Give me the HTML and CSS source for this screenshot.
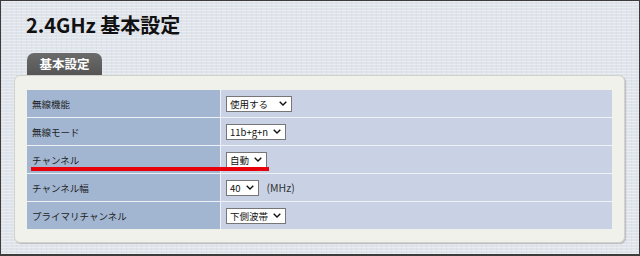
FILE: index.html
```html
<!DOCTYPE html>
<html lang="ja">
<head>
<meta charset="utf-8">
<title>2.4GHz 基本設定</title>
<link rel="stylesheet" href="styles.css">
</head>
<body>
<div class="frame">
  <h1 class="title">2.4GHz 基本設定</h1>
  <div class="section">
    <div class="tab">基本設定</div>
    <div class="panel">
      <div class="table">
        <div class="label">無線機能</div>
        <div class="value"><div class="select select-wide"><span>使用する</span><svg class="chev" viewBox="0 0 8 5"><path d="M0.7 0.7 L4 4 L7.3 0.7"/></svg></div></div>
        <div class="label">無線モード</div>
        <div class="value"><div class="select"><span>11b+g+n</span><svg class="chev" viewBox="0 0 8 5"><path d="M0.7 0.7 L4 4 L7.3 0.7"/></svg></div></div>
        <div class="label">チャンネル</div>
        <div class="value"><div class="select"><span>自動</span><svg class="chev" viewBox="0 0 8 5"><path d="M0.7 0.7 L4 4 L7.3 0.7"/></svg></div></div>
        <div class="label">チャンネル幅</div>
        <div class="value"><div class="select"><span>40</span><svg class="chev" viewBox="0 0 8 5"><path d="M0.7 0.7 L4 4 L7.3 0.7"/></svg></div><span class="unit">(MHz)</span></div>
        <div class="label">プライマリチャンネル</div>
        <div class="value"><div class="select"><span>下側波帯</span><svg class="chev" viewBox="0 0 8 5"><path d="M0.7 0.7 L4 4 L7.3 0.7"/></svg></div></div>
      </div>
    </div>
  </div>
  <div class="highlight"></div>
</div>
</body>
</html>
```

FILE: styles.css
```css
html, body {
  margin: 0;
  padding: 0;
}
body {
  font-family: "Noto Sans CJK JP", "Noto Sans", sans-serif;
  color: #1c1c1c;
}
.frame {
  position: relative;
  width: 640px;
  height: 256px;
  box-sizing: border-box;
  border: 1px solid #3c3c3c;
  border-bottom-width: 2px;
  background-color: #dfe3ea;
  background-image:
    repeating-linear-gradient(180deg, rgba(255,255,255,0.35) 0 1px, rgba(0,0,0,0) 1px 3px),
    repeating-linear-gradient(90deg, rgba(140,150,170,0.07) 0 1px, rgba(0,0,0,0) 1px 5px);
  overflow: hidden;
}
.title {
  margin: 12px 0 0 25px;
  font-size: 20px;
  line-height: 24px;
  font-weight: 700;
  color: #111;
}
.section {
  margin: 16px 0 0 13px;
}
.tab {
  margin-left: 13px;
  width: 75px;
  height: 22px;
  box-sizing: border-box;
  border-radius: 7px 7px 0 0;
  background: linear-gradient(#6b6b6b, #555555);
  color: #fff;
  font-size: 12.5px;
  font-weight: 700;
  line-height: 22px;
  text-align: center;
}
.panel {
  width: 611px;
  height: 168px;
  box-sizing: border-box;
  padding: 14px 12px 13px 12px;
  background: #f1f1eb;
  border: 1px solid #d2d2cc;
  border-radius: 6px;
  box-shadow: 1px 1px 1px rgba(0,0,0,0.18);
}
.table {
  display: grid;
  grid-template-columns: 193px 1fr;
  grid-auto-rows: 27px;
  gap: 1px;
  background: #eef1f6;
}
.label {
  background: #a2b6d2;
  padding-left: 5px;
  display: flex;
  align-items: center;
  font-size: 9.5px;
  color: #1e1e1e;
}
.value {
  background: #c9d2e5;
  padding-left: 5px;
  display: flex;
  align-items: center;
}
.select {
  height: 16px;
  box-sizing: border-box;
  border: 1px solid #767676;
  background: #fff;
  display: flex;
  align-items: center;
  gap: 5px;
  padding: 0 4px 0 3px;
  font-size: 9.5px;
  color: #111;
}
.select-wide {
  width: 66px;
  justify-content: space-between;
}
.chev {
  width: 8px;
  height: 5px;
  fill: none;
  stroke: #111;
  stroke-width: 1.4;
}
.unit {
  margin-left: 8px;
  font-size: 10.5px;
  color: #333;
}
.highlight {
  position: absolute;
  left: 30px;
  top: 166px;
  width: 238px;
  height: 4px;
  background: #e8000a;
}
```
